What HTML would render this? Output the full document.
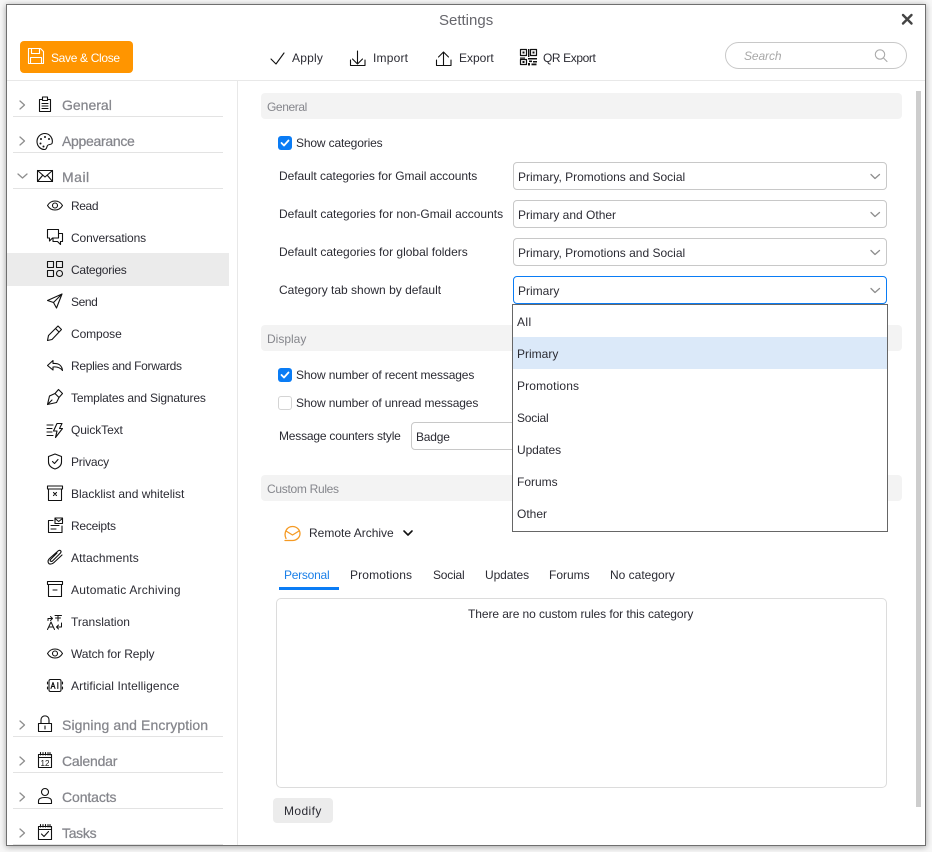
<!DOCTYPE html>
<html><head><meta charset="utf-8"><title>Settings</title>
<style>
html,body{margin:0;padding:0;width:932px;height:852px;overflow:hidden;background:#f7f7f7}
body{position:relative;font-family:"Liberation Sans",sans-serif;font-size:12px;color:#2b2b33}
#win{position:absolute;left:6px;top:4px;width:918px;height:840px;background:#fff;border:1px solid #6f6f6f;box-shadow:0 1px 6px rgba(0,0,0,.35)}
.a{position:absolute;box-sizing:border-box}
.t{position:absolute;line-height:18px;height:18px;white-space:nowrap}
.h{font-size:14px;color:#85868c;-webkit-text-stroke:.25px #85868c}
.ln{position:absolute;left:13px;width:210px;height:1px;background:#e3e3e3}
.bar{position:absolute;left:261px;width:641px;height:26px;background:#f3f3f3;border-radius:4px}
.s{color:#85868c}
.sel{position:absolute;left:513px;width:374px;height:28px;box-sizing:border-box;border:1px solid #c8c8c8;border-radius:4px;background:#fff}
svg{position:absolute;left:0;top:0}
</style></head><body>
<div id="win"></div>

<div class="a" style="left:7px;top:80px;width:918px;height:1px;background:#e8e8e8"></div>
<div class="a" style="left:237px;top:81px;width:1px;height:764px;background:#e8e8e8"></div>
<div class="a" style="left:20px;top:41px;width:113px;height:32px;background:#ff9500;border-radius:4px"></div>
<div class="t" style="left:51px;top:49px;color:#fff;letter-spacing:-.33px">Save &amp; Close</div>
<div class="t" style="left:439px;top:12px;font-size:15px;color:#66666c">Settings</div>
<div class="t" style="left:292px;top:49px;letter-spacing:.2px">Apply</div>
<div class="t" style="left:373px;top:49px;letter-spacing:.2px">Import</div>
<div class="t" style="left:459px;top:49px">Export</div>
<div class="t" style="left:543px;top:49px;letter-spacing:-.4px">QR Export</div>
<div class="a" style="left:725px;top:42px;width:182px;height:27px;border:1px solid #c8c8c8;border-radius:14px"></div>
<div class="t" style="left:744px;top:47px;font-style:italic;color:#a8a8a8;letter-spacing:-.1px">Search</div>

<div class="a" style="left:7px;top:253px;width:222px;height:33px;background:#ebebeb"></div>
<div class="t h" style="left:62px;top:96px">General</div><div class="ln" style="top:116px"></div>
<div class="t h" style="left:62px;top:132px;letter-spacing:-.3px">Appearance</div><div class="ln" style="top:152px"></div>
<div class="t h" style="left:62px;top:168px;letter-spacing:.5px">Mail</div><div class="ln" style="top:188px"></div>
<div class="t" style="left:71px;top:197px;letter-spacing:-.4px">Read</div>
<div class="t" style="left:71px;top:229px;letter-spacing:-.13px">Conversations</div>
<div class="t" style="left:71px;top:261px;letter-spacing:-.25px">Categories</div>
<div class="t" style="left:71px;top:293px;letter-spacing:-.4px">Send</div>
<div class="t" style="left:71px;top:325px;letter-spacing:-.1px">Compose</div>
<div class="t" style="left:71px;top:357px;letter-spacing:-.3px">Replies and Forwards</div>
<div class="t" style="left:71px;top:389px;letter-spacing:-.17px">Templates and Signatures</div>
<div class="t" style="left:71px;top:421px;letter-spacing:-.1px">QuickText</div>
<div class="t" style="left:71px;top:453px;letter-spacing:-.2px">Privacy</div>
<div class="t" style="left:71px;top:485px">Blacklist and whitelist</div>
<div class="t" style="left:71px;top:517px;letter-spacing:-.25px">Receipts</div>
<div class="t" style="left:71px;top:549px;letter-spacing:.1px">Attachments</div>
<div class="t" style="left:71px;top:581px;letter-spacing:.23px">Automatic Archiving</div>
<div class="t" style="left:71px;top:613px">Translation</div>
<div class="t" style="left:71px;top:645px;letter-spacing:-.1px">Watch for Reply</div>
<div class="t" style="left:71px;top:677px;letter-spacing:.1px">Artificial Intelligence</div>
<div class="t h" style="left:62px;top:716px;letter-spacing:.1px">Signing and Encryption</div><div class="ln" style="top:736px"></div>
<div class="t h" style="left:62px;top:752px;letter-spacing:-.2px">Calendar</div><div class="ln" style="top:772px"></div>
<div class="t h" style="left:62px;top:788px;letter-spacing:-.1px">Contacts</div><div class="ln" style="top:808px"></div>
<div class="t h" style="left:62px;top:824px;letter-spacing:-.3px">Tasks</div><div class="ln" style="top:844px"></div>

<div class="a" style="left:916px;top:91px;width:5px;height:716px;background:#cdcdcd"></div>

<div class="bar" style="top:93px"></div><div class="t s" style="left:267px;top:98px;letter-spacing:-.4px">General</div>
<div class="bar" style="top:325px"></div><div class="t s" style="left:267px;top:330px">Display</div>
<div class="bar" style="top:475px"></div><div class="t s" style="left:267px;top:480px;letter-spacing:-.3px">Custom Rules</div>

<div class="a" style="left:278px;top:136px;width:14px;height:14px;border-radius:3px;background:#0a7cf5"></div>
<div class="t" style="left:296px;top:134px;letter-spacing:-.15px">Show categories</div>
<div class="t" style="left:279px;top:167px;letter-spacing:-.05px">Default categories for Gmail accounts</div>
<div class="t" style="left:279px;top:205px">Default categories for non-Gmail accounts</div>
<div class="t" style="left:279px;top:243px">Default categories for global folders</div>
<div class="t" style="left:279px;top:281px">Category tab shown by default</div>
<div class="sel" style="top:162px"></div><div class="t" style="left:518px;top:168px">Primary, Promotions and Social</div>
<div class="sel" style="top:200px"></div><div class="t" style="left:518px;top:206px">Primary and Other</div>
<div class="sel" style="top:238px"></div><div class="t" style="left:518px;top:244px">Primary, Promotions and Social</div>
<div class="sel" style="top:276px;border-color:#0a7cf5"></div><div class="t" style="left:518px;top:282px">Primary</div>

<div class="a" style="left:278px;top:368px;width:14px;height:14px;border-radius:3px;background:#0a7cf5"></div>
<div class="t" style="left:296px;top:366px;letter-spacing:-.13px">Show number of recent messages</div>
<div class="a" style="left:278px;top:396px;width:14px;height:14px;border-radius:3px;border:1px solid #d4d4d4;background:#fff"></div>
<div class="t" style="left:296px;top:394px;letter-spacing:-.13px">Show number of unread messages</div>
<div class="t" style="left:279px;top:427px;letter-spacing:-.2px">Message counters style</div>
<div class="a" style="left:411px;top:422px;width:120px;height:28px;border:1px solid #c8c8c8;border-radius:4px"></div>
<div class="t" style="left:416px;top:428px;letter-spacing:-.2px">Badge</div>

<div class="t" style="left:309px;top:524px">Remote Archive</div>
<div class="t" style="left:284px;top:566px;color:#1a7fe8;letter-spacing:-.25px">Personal</div>
<div class="a" style="left:279px;top:587px;width:60px;height:3px;background:#0a7cf5"></div>
<div class="t" style="left:350px;top:566px;letter-spacing:.15px">Promotions</div>
<div class="t" style="left:433px;top:566px;letter-spacing:-.2px">Social</div>
<div class="t" style="left:485px;top:566px;letter-spacing:-.1px">Updates</div>
<div class="t" style="left:549px;top:566px">Forums</div>
<div class="t" style="left:610px;top:566px">No category</div>
<div class="a" style="left:276px;top:598px;width:611px;height:190px;border:1px solid #dcdcdc;border-radius:5px"></div>
<div class="t" style="left:468px;top:605px;letter-spacing:-.08px">There are no custom rules for this category</div>
<div class="a" style="left:273px;top:798px;width:60px;height:25px;background:#ececec;border-radius:4px"></div>
<div class="t" style="left:284px;top:802px;letter-spacing:.4px">Modify</div>

<svg width="932" height="852" viewBox="0 0 932 852" fill="none" stroke="#111" stroke-width="1.1" stroke-linejoin="round" stroke-linecap="round">
<!-- save -->
<g stroke="#fff"><path d="M28.5 48.5H40.5L43.5 51.5V63.5H28.5Z"/><path d="M31.5 48.5V53.5H39.5V48.5"/><path d="M30.5 63.5V57.5H41.5V63.5"/></g>
<!-- toolbar -->
<path d="M271 59L276 64L284 53"/>
<path d="M357.500 51V63M352.500 59L357.500 64L362.500 59M350.500 60V65.500H365V60"/>
<path d="M443.500 65V52M438.500 57L443.500 52L448.500 57M436.500 60V65.500H451V60"/>
<g stroke-width="1.2"><rect x="520.5" y="49.5" width="6" height="6"/><rect x="530.5" y="49.5" width="6" height="6"/><rect x="520.5" y="59.5" width="6" height="5"/></g>
<g fill="#111" stroke="none"><rect x="522.5" y="51.5" width="2" height="2"/><rect x="532.5" y="51.5" width="2" height="2"/><rect x="522.5" y="61" width="2" height="2"/><rect x="528" y="49" width="1.4" height="8"/><rect x="528" y="58" width="9" height="1.5"/><rect x="529" y="60.5" width="3" height="1.6"/><rect x="533" y="61" width="4" height="1.5"/><rect x="528" y="63" width="2" height="2.5"/><rect x="531.5" y="63.5" width="5" height="1.8"/><rect x="520" y="57.5" width="5" height="1.2"/></g>
<!-- close -->
<path d="M903 15L911.5 23.5M911.5 15L903 23.5" stroke="#444" stroke-width="2.4"/>
<!-- search -->
<g stroke="#aaa"><circle cx="880" cy="54.5" r="4.7"/><path d="M883.5 58L887 61.5"/></g>
<!-- sidebar chevrons -->
<g stroke="#8e8e8e" stroke-width="1.3"><path d="M20 101L24.5 105L20 109"/><path d="M20 137L24.5 141L20 145"/><path d="M18 174L22.5 178L27 174"/><path d="M20 721L24.5 725L20 729"/><path d="M20 757L24.5 761L20 765"/><path d="M20 793L24.5 797L20 801"/><path d="M20 829L24.5 833L20 837"/></g>
<!-- General -->
<path d="M42.5 99.5H39.5V111.5H50.5V99.5H47.5"/><rect x="42.5" y="97" width="5" height="3.5"/><path d="M42 103.5H48M42 106H48M42 108.5H48"/>
<!-- Appearance -->
<path d="M45 133.500C40 133.500 37 137.500 37 141.500C37 146 40.500 149.500 44.500 149.500C47 149.500 46.500 147 47.500 145.500C48.500 144 51 145 52 143.500C53.500 139 50 133.500 45 133.500Z"/>
<g fill="#111" stroke="none"><circle cx="41" cy="139" r="1"/><circle cx="45" cy="137" r="1"/><circle cx="49" cy="139" r="1"/><circle cx="40.500" cy="143.500" r="1"/><circle cx="43.500" cy="146.500" r="1"/></g>
<!-- Mail -->
<rect x="37.500" y="170.500" width="15" height="11"/><path d="M37.500 170.500L45 177L52.500 170.500M37.500 181.500L42.500 175.500M52.500 181.500L47.500 175.500"/>
<!-- Read -->
<path d="M47.500 205.500C51 199.500 59 199.500 62.500 205.500C59 211.500 51 211.500 47.500 205.500Z"/><circle cx="55" cy="205.500" r="2.500"/>
<!-- Conversations -->
<path d="M47.500 229.500H58.500V238H52.500L49.500 241V238H47.500Z"/><path d="M58.500 233.500H62.500V241.500H60.500V244.500L57.500 241.500H53V238"/>
<!-- Categories -->
<rect x="47.500" y="261.500" width="6" height="6"/><rect x="56.500" y="261.500" width="6" height="6"/><rect x="47.500" y="270.500" width="6" height="6"/><circle cx="59.500" cy="273.500" r="3"/>
<!-- Send -->
<path d="M47.500 300.500L62 294L56.500 308L53.500 302.500ZM53.500 302.500L62 294"/>
<!-- Compose -->
<path d="M47.500 340.500L48.500 335.500L58 326L61.500 329.500L52 339.500ZM55.500 328.500L59 332"/>
<!-- Replies -->
<path d="M53 360.500L47.500 365.500L53 370V367C57 366.500 60.500 368 62.500 370.500C62 365.500 58.500 363 53 363.500Z"/>
<!-- Templates -->
<path d="M47.500 404.500L49.500 396L55 393.500L59 397.500L56.500 402.500ZM47.500 404.500L52 400M55 393.500L58.500 389.500L62.500 393.500L59 397.500"/>
<!-- QuickText -->
<path d="M47 425H53M47 428.500H52M47 432H52M47 435.500H53"/><path d="M57 423.500H62L59.500 428.500H62.500L55.500 437.500L57 431H53.500Z"/>
<!-- Privacy -->
<path d="M55 454L61.500 456.500V462C61.500 466 58 468 55 469C52 468 48.500 466 48.500 462V456.500Z"/><path d="M52.500 461.500L54.500 463.500L58 459.500"/>
<!-- Blacklist -->
<rect x="47.500" y="486" width="15" height="3"/><path d="M48.500 489V500.500H61.500V489"/><path d="M53.500 492.500L56.500 495.500M56.500 492.500L53.500 495.500"/>
<!-- Receipts -->
<path d="M53 520.500H48.500V532.500H62V526"/><rect x="55" y="518" width="7.500" height="5.500"/><path d="M55 518.500L58.700 521.500L62.500 518.500M51 525.500H59M51 529H56"/>
<!-- Attachments -->
<path d="M60.500 553C62 551 60 549.500 58 551L49.500 558.500C47 561 48 564.500 51 564C52 564 53 563.500 54 562.500L62 555M57 553L50.500 559.500C49.500 561 51 562 52.500 561L60.500 553"/>
<!-- Archiving -->
<rect x="47.500" y="581.500" width="15" height="3"/><path d="M48.500 584.500V596.500H61.500V584.500M53 590H57"/>
<!-- Translation -->
<g stroke-width="1"><path d="M48 618.500H52M50.500 616.500L52.500 618.500L50.500 620.500M48 618.500V620.500"/><path d="M55 615.500H61.500M58 615.500V621M55.500 618H60.500"/><path d="M47.500 629.500L51 622L54.500 629.500M49 627H53"/><path d="M61.500 623V627H56.500M58.500 625L56.500 627L58.500 629"/></g>
<!-- Watch -->
<path d="M47.500 653.500C51 647.500 59 647.500 62.500 653.500C59 659.500 51 659.500 47.500 653.500Z"/><circle cx="55" cy="653.500" r="2.500"/>
<!-- AI -->
<rect x="49" y="679.500" width="12" height="12" rx="1.500"/><path d="M47.500 682V684M47.500 687V689M62.500 682V684M62.500 687V689"/>
<path d="M51 688.500L53 682.500L55 688.500M51.700 686.500H54.300M57.800 682.500V688.500" stroke-width="1.1"/>
<!-- Signing -->
<rect x="38.500" y="723.500" width="13" height="8"/><path d="M41 723.500V720C41 714.500 49 714.500 49 720V723.500M45 726V729" />
<!-- Calendar -->
<rect x="38.500" y="754.500" width="13" height="13"/><path d="M38.500 757.500H51.500M40.500 752.500V755M43 752.500V755M45.500 752.500V755M48 752.500V755M50 752.500V755"/>
<text x="45" y="766" font-family="Liberation Sans,sans-serif" font-size="8" text-anchor="middle" fill="#111" stroke="none">12</text>
<!-- Contacts -->
<circle cx="45" cy="792" r="3.500"/><path d="M38.500 803.500V801C38.500 798.500 41 797.500 45 797.500C49 797.500 51.500 798.500 51.500 801V803.500Z"/>
<!-- Tasks -->
<rect x="38.500" y="826.500" width="13" height="13"/><path d="M38.500 829.500H51.500M40.500 824.500V827M43 824.500V827M45.500 824.500V827M48 824.500V827M50 824.500V827M41.500 834L44 836.500L48.500 831.500"/>
<!-- checks -->
<g stroke="#fff" stroke-width="1.8"><path d="M281.500 143L284 145.500L288.500 140.500"/><path d="M281.500 375L284 377.500L288.500 372.500"/></g>
<!-- select chevrons -->
<g stroke="#8e8e8e" stroke-width="1.3"><path d="M871 174.500L875 178.500L879.500 174.500"/><path d="M871 212.500L875 216.500L879.500 212.500"/><path d="M871 250.500L875 254.500L879.500 250.500"/><path d="M871 288.500L875 292.500L879.500 288.500"/></g>
<!-- Remote archive -->
<g stroke="#f59a23" stroke-width="1.3"><path d="M286 538.500C283.500 533 286.500 526.500 292.500 526.500C297 526.500 300 530 300 533.500C300 537.500 296.500 540.500 292.500 540.500H285"/><path d="M286 531L292.500 535L299 531"/></g>
<path d="M404 531L408 535L412 531" stroke-width="1.6"/>
</svg>

<div class="a" style="left:512px;top:304px;width:376px;height:228px;background:#fff;border:1px solid #666"></div>
<div class="a" style="left:513px;top:337px;width:374px;height:32px;background:#dbe9f9"></div>
<div class="t" style="left:517px;top:313px;letter-spacing:.4px">All</div>
<div class="t" style="left:517px;top:345px">Primary</div>
<div class="t" style="left:517px;top:377px;letter-spacing:.15px">Promotions</div>
<div class="t" style="left:517px;top:409px;letter-spacing:-.2px">Social</div>
<div class="t" style="left:517px;top:441px;letter-spacing:-.1px">Updates</div>
<div class="t" style="left:517px;top:473px">Forums</div>
<div class="t" style="left:517px;top:505px">Other</div>
</body></html>
